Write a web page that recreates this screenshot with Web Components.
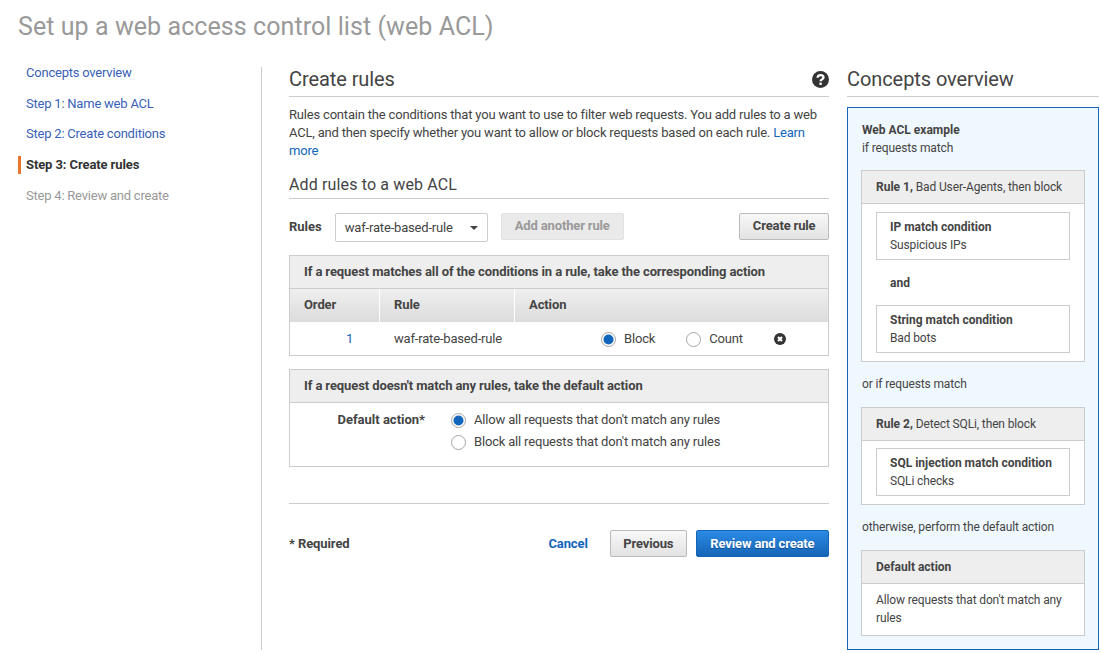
<!DOCTYPE html>
<html lang="en">
<head>
<meta charset="utf-8">
<title>Set up a web access control list (web ACL)</title>
<style>
    html, body { margin: 0; padding: 0; background: #fff; }
    body { font: 13px/18px Roboto, "Liberation Sans", sans-serif; color: #444; letter-spacing: -0.18px; width: 1102px; height: 653px; overflow: hidden; }
</style>
</head>
<body>
<waf-wizard></waf-wizard>

<script>
// small helper, every element just stamps its markup in an open shadow root
class Base extends HTMLElement {
    constructor() {
        super();
        this.attachShadow({mode: 'open'}).innerHTML = this.template();
    }
    template() { return ''; }
}

class WafHeading extends Base {
    template() {
        return `
            <style>
                :host { display: flex; align-items: center; justify-content: space-between; border-bottom: 1px solid #ccc; color: #444; }
                :host([size="large"]) { font-size: 20px; line-height: 24px; padding-bottom: 5px; letter-spacing: -0.08px; }
                :host([size="small"]) { font-size: 16px; line-height: 20px; padding-bottom: 3px; letter-spacing: 0.14px; }
            </style>
            <slot></slot><slot name="icon"></slot>
        `;
    }
}

class WafNav extends Base {
    template() {
        return `
            <style>
                :host { display: block; padding-left: 18px; border-right: 1px solid #ccc; }
                ul { list-style: none; margin: -3px 0 0; padding: 0; }
                li { height: 18px; margin-bottom: 12.7px; padding-left: 8px; color: #3a5fb8; white-space: nowrap; letter-spacing: -0.22px; }
                li.on { color: #333; font-weight: 700; letter-spacing: -0.1px; border-left: 3px solid #e8762d; padding-left: 5px; }
                li.off { color: #999; }
            </style>
            <ul>
                <li>Concepts overview</li>
                <li>Step 1: Name web ACL</li>
                <li>Step 2: Create conditions</li>
                <li class="on">Step 3: Create rules</li>
                <li class="off">Step 4: Review and create</li>
            </ul>
        `;
    }
}

class WafButton extends Base {
    template() {
        return `
            <style>
                :host { display: inline-flex; align-items: center; justify-content: center; box-sizing: border-box; height: 27px; padding: 0 12.5px; border: 1px solid #bbb; border-radius: 2px; background: linear-gradient(#f8f8f8, #e2e2e2); color: #444; font-weight: 700; letter-spacing: -0.15px; white-space: nowrap; }
                :host([variant="primary"]) { padding: 0 13.5px; background: linear-gradient(#2b8ae4, #1565b7); border-color: #1566b8; color: #fff; text-shadow: 0 1px 0 #0f4f92; }
                :host([disabled]) { padding: 0 13px; background: #eaeaea; border-color: #e2e2e2; color: #999; }
                :host([raised]) { padding-bottom: 2px; }
            </style>
            <slot></slot>
        `;
    }
}

class WafRadio extends Base {
    template() {
        return `
            <style>
                :host { display: inline-flex; align-items: center; gap: 8px; white-space: nowrap; }
                svg { display: block; flex: none; }
                .dot { display: none; }
                :host([checked]) .dot { display: block; }
            </style>
            <svg width="15" height="15" viewBox="0 0 15 15">
                <circle cx="7.5" cy="7.5" r="7" fill="#fff" stroke="#a6a6a6"/>
                <circle class="dot" cx="7.5" cy="7.5" r="5" fill="#1166bb"/>
            </svg>
            <span><slot></slot></span>
        `;
    }
}

class WafSelect extends Base {
    template() {
        return `
            <style>
                :host { display: flex; align-items: center; justify-content: space-between; box-sizing: border-box; height: 29px; padding: 0 9px 0 9px; border: 1px solid #ccc; border-radius: 2px; background: #fff; white-space: nowrap; }
                i { width: 0; height: 0; border: 4px solid transparent; border-top: 4px solid #444; border-bottom: 0; }
            </style>
            <slot></slot><i></i>
        `;
    }
}

class WafPanel extends Base {
    template() {
        return `
            <style>
                :host { display: block; border: 1px solid #ccc; background: #fff; }
                header { box-sizing: border-box; height: 33px; padding: 0 14px; display: flex; align-items: center; background: #eee; border-bottom: 1px solid #ccc; color: #444; font-weight: 700; letter-spacing: -0.1px; }
            </style>
            <header><slot name="title"></slot></header>
            <slot></slot>
        `;
    }
}

class WafRuleTable extends Base {
    template() {
        return `
            <style>
                :host { display: block; }
                .row { display: grid; grid-template-columns: 90px 135px 1fr; }
                .head { height: 33px; background: linear-gradient(#efefef, #dcdcdc); font-weight: 700; letter-spacing: -0.1px; }
                .head div { display: flex; align-items: center; padding: 0 0 2px 14px; border-right: 1px solid #fff; }
                .head div:last-child { border: 0; }
                .body { box-sizing: border-box; height: 33px; padding-top: 1px; align-items: center; }
                .num { color: #1166bb; text-align: center; padding-left: 29px; }
                .name { padding-left: 14px; }
                .act { display: flex; align-items: center; padding-left: 86px; }
                waf-radio + waf-radio { margin-left: 31px; }
                svg { margin-left: 31px; display: block; }
            </style>
            <div class="row head"><div>Order</div><div>Rule</div><div>Action</div></div>
            <div class="row body">
                <div class="num">1</div>
                <div class="name">waf-rate-based-rule</div>
                <div class="act">
                    <waf-radio checked>Block</waf-radio>
                    <waf-radio>Count</waf-radio>
                    <svg width="12" height="12" viewBox="0 0 12 12"><circle cx="6" cy="6" r="6" fill="#333"/><path d="M4 4l4 4M8 4l-4 4" stroke="#fff" stroke-width="2.2"/></svg>
                </div>
            </div>
        `;
    }
}

class WafDefaultAction extends Base {
    template() {
        return `
            <style>
                :host { display: grid; grid-template-columns: 135px 1fr; column-gap: 26px; height: 55px; padding-top: 8px; }
                b { text-align: right; color: #444; letter-spacing: 0; }
                .opts { display: flex; flex-direction: column; gap: 4px; align-items: flex-start; }
            </style>
            <b>Default action*</b>
            <div class="opts">
                <waf-radio checked>Allow all requests that don't match any rules</waf-radio>
                <waf-radio>Block all requests that don't match any rules</waf-radio>
            </div>
        `;
    }
}

class WafCondition extends Base {
    template() {
        return `
            <style>
                :host { display: block; border: 1px solid #ccc; padding: 5px 13px; background: #fff; }
                b { display: block; font-weight: 700; color: #444; letter-spacing: 0; white-space: nowrap; }
            </style>
            <b><slot name="title"></slot></b>
            <slot></slot>
        `;
    }
}

class WafConceptRule extends Base {
    template() {
        return `
            <style>
                :host { display: block; border: 1px solid #ccc; background: #fff; }
                header { box-sizing: border-box; height: 33px; padding: 0 14px; display: flex; align-items: center; background: #eee; border-bottom: 1px solid #ccc; white-space: pre; }
                .c { padding: 8px 14px; }
                :host([tight]) .c { padding-top: 7px; }
            </style>
            <header><slot name="title"></slot></header>
            <div class="c"><slot></slot></div>
        `;
    }
}

class WafConcepts extends Base {
    template() {
        return `
            <style>
                :host { display: block; }
                .box { box-sizing: border-box; height: 543px; margin-top: 10px; padding: 13px 13px 0; border: 1px solid #1566b8; background: #f0f8ff; font-size: 12px; letter-spacing: -0.13px; }
                b { font-weight: 700; letter-spacing: 0; }
                p { margin: 0 0 0 1px; }
                .and { margin: 14px 14px 13px; font-weight: 700; letter-spacing: 0; }
                .gap { margin: 13px 0 14px 1px; }
                .first { margin-bottom: 13px; }
            </style>
            <waf-heading size="large">Concepts overview</waf-heading>
            <div class="box">
                <p class="first"><b>Web ACL example</b><br>if requests match</p>
                <waf-concept-rule>
                    <span slot="title"><b>Rule 1,</b> Bad User-Agents, then block</span>
                    <waf-condition><span slot="title">IP match condition</span>Suspicious IPs</waf-condition>
                    <p class="and">and</p>
                    <waf-condition><span slot="title">String match condition</span>Bad bots</waf-condition>
                </waf-concept-rule>
                <p class="gap">or if requests match</p>
                <waf-concept-rule tight>
                    <span slot="title"><b>Rule 2,</b> Detect SQLi, then block</span>
                    <waf-condition><span slot="title">SQL injection match condition</span>SQLi checks</waf-condition>
                </waf-concept-rule>
                <p class="gap">otherwise, perform the default action</p>
                <waf-concept-rule tight>
                    <span slot="title"><b>Default action</b></span>
                    <span>Allow requests that don't match any rules</span>
                </waf-concept-rule>
            </div>
        `;
    }
}

class WafRulesForm extends Base {
    template() {
        return `
            <style>
                :host { display: block; }
                p { margin: 0; }
                a { color: #1166bb; text-decoration: none; }
                .intro { margin: 9px 0 15px; letter-spacing: -0.19px; }
                .tools { display: flex; align-items: flex-start; margin: 14px 0 13px; height: 29px; }
                .tools b { margin-right: 13px; line-height: 27px; letter-spacing: 0; }
                .tools waf-select { margin-right: 13px; width: 153px; }
                .spacer { flex: 1; }
                waf-panel + waf-panel { margin-top: 13px; }
                .rule { border-top: 1px solid #ccc; margin-top: 36px; }
                .foot { display: flex; align-items: center; margin-top: 26px; }
                .foot b { flex: 1; letter-spacing: -0.1px; }
                .foot a { font-weight: 700; margin-right: 22px; letter-spacing: -0.1px; }
                .foot waf-button + waf-button { margin-left: 9px; }
                svg { display: block; }
            </style>
            <waf-heading size="large">Create rules
                <svg slot="icon" width="17" height="17" viewBox="0 0 17 17"><circle cx="8.5" cy="8.5" r="8.5" fill="#333"/><path d="M5.6 6.8c0-1.7 1.3-2.7 3-2.7s2.9 1 2.9 2.4c0 1.8-2.9 1.9-2.9 3.7" fill="none" stroke="#fff" stroke-width="2.3"/><rect x="7.4" y="11.6" width="2.4" height="2.3" fill="#fff"/></svg>
            </waf-heading>
            <p class="intro">Rules contain the conditions that you want to use to filter web requests. You add rules to a web ACL, and then specify whether you want to allow or block requests based on each rule. <a>Learn more</a></p>
            <waf-heading size="small">Add rules to a web ACL</waf-heading>
            <div class="tools">
                <b>Rules</b>
                <waf-select>waf-rate-based-rule</waf-select>
                <waf-button disabled raised>Add another rule</waf-button>
                <span class="spacer"></span>
                <waf-button raised>Create rule</waf-button>
            </div>
            <waf-panel>
                <span slot="title">If a request matches all of the conditions in a rule, take the corresponding action</span>
                <waf-rule-table></waf-rule-table>
            </waf-panel>
            <waf-panel>
                <span slot="title">If a request doesn't match any rules, take the default action</span>
                <waf-default-action></waf-default-action>
            </waf-panel>
            <div class="rule"></div>
            <div class="foot">
                <b>* Required</b>
                <a>Cancel</a>
                <waf-button>Previous</waf-button>
                <waf-button variant="primary">Review and create</waf-button>
            </div>
        `;
    }
}

class WafWizard extends Base {
    template() {
        return `
            <style>
                :host { display: block; }
                h1 { margin: 0; height: 67px; box-sizing: border-box; padding: 11px 0 0 18px; font-size: 25px; line-height: 32px; font-weight: 400; color: #999; letter-spacing: 0.07px; white-space: nowrap; }
                .cols { display: grid; grid-template-columns: 262px 567px 270px; height: 583px; }
                waf-rules-form { margin-left: 27px; }
                waf-concepts { margin-left: 18px; }
            </style>
            <h1>Set up a web access control list (web ACL)</h1>
            <div class="cols">
                <waf-nav></waf-nav>
                <waf-rules-form></waf-rules-form>
                <waf-concepts></waf-concepts>
            </div>
        `;
    }
}

window.customElements.define('waf-heading', WafHeading);
window.customElements.define('waf-nav', WafNav);
window.customElements.define('waf-button', WafButton);
window.customElements.define('waf-radio', WafRadio);
window.customElements.define('waf-select', WafSelect);
window.customElements.define('waf-panel', WafPanel);
window.customElements.define('waf-rule-table', WafRuleTable);
window.customElements.define('waf-default-action', WafDefaultAction);
window.customElements.define('waf-condition', WafCondition);
window.customElements.define('waf-concept-rule', WafConceptRule);
window.customElements.define('waf-concepts', WafConcepts);
window.customElements.define('waf-rules-form', WafRulesForm);
window.customElements.define('waf-wizard', WafWizard);
</script>
</body>
</html>
